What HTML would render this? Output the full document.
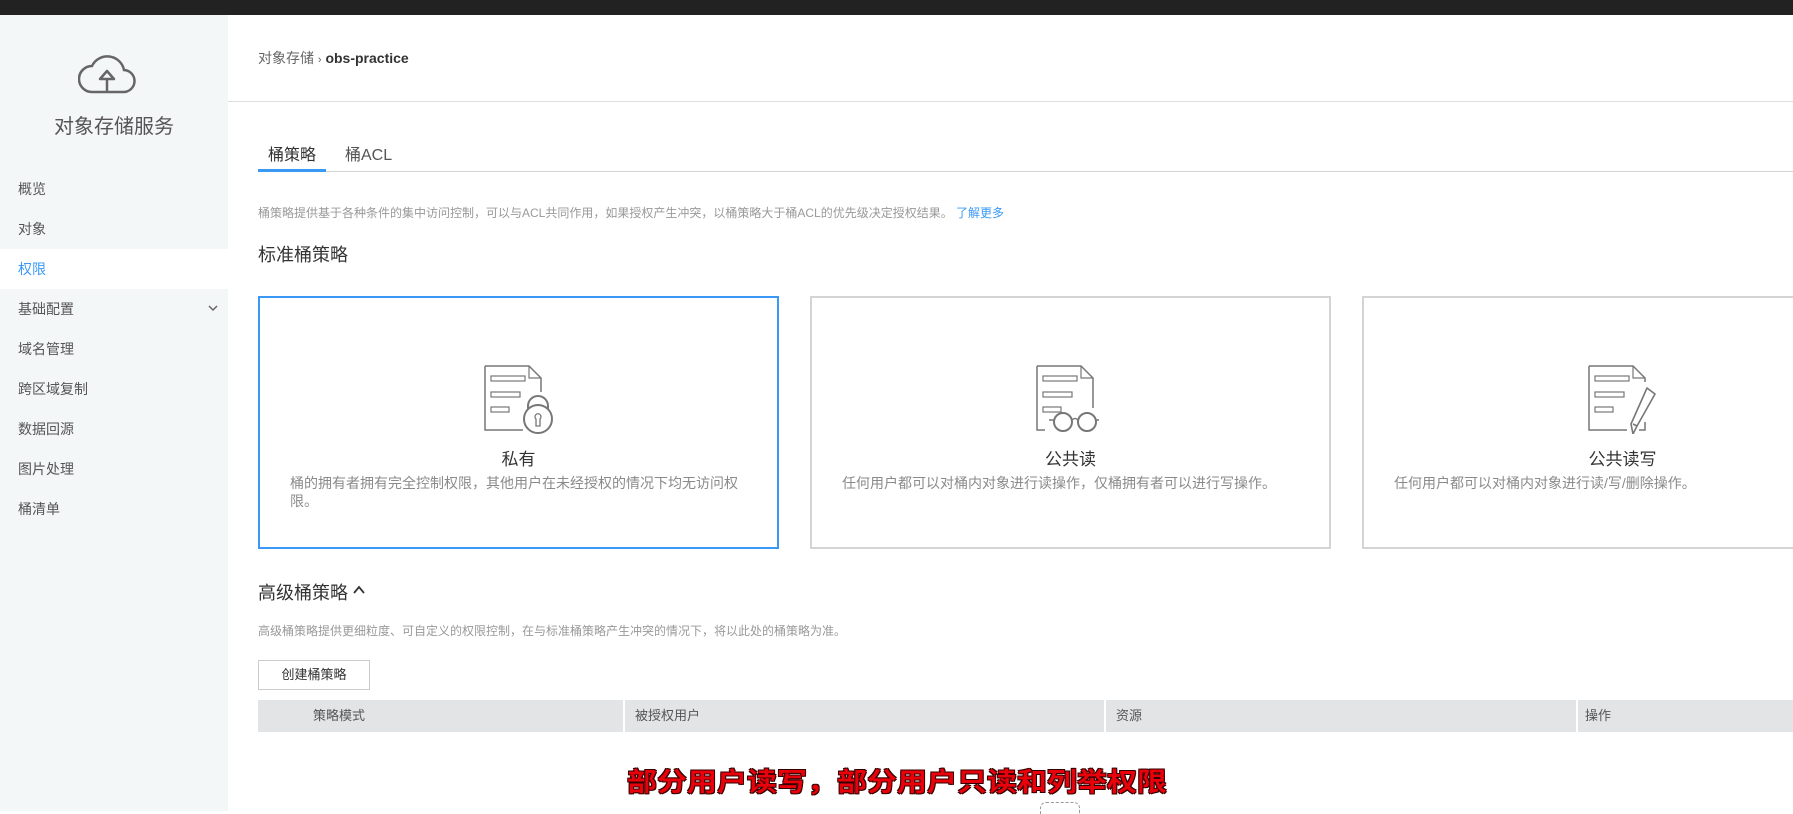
<!DOCTYPE html>
<html><head><meta charset="utf-8">
<style>
*{margin:0;padding:0;box-sizing:border-box}
body{width:1793px;height:811px;overflow:hidden;background:#fff;font-family:"Liberation Sans","Noto Sans CJK SC",sans-serif;position:relative;color:#333}
.a{position:absolute;white-space:nowrap}
#top{left:0;top:0;width:1793px;height:15px;background:#222}
#side{left:0;top:15px;width:228px;height:796px;background:#f4f7f8}
.mi{position:absolute;left:18px;font-size:14px;color:#555;line-height:20px}
.card{position:absolute;top:296px;width:521px;height:253px;border:2px solid #d4d4d4;background:#fff}
.card.sel{border-color:#3a99f5}
.card .t{position:absolute;left:0;right:0;top:147px;text-align:center;font-size:17px;color:#333}
.card .d{position:absolute;left:30px;width:452px;top:176px;font-size:14px;color:#8a8a8a;line-height:18px;white-space:normal}
.card svg{position:absolute;left:50%;top:66px;margin-left:-36px}
.th{position:absolute;top:700px;height:32px;background:#e2e4e6;font-size:13px;color:#555;line-height:32px}
</style></head><body>
<div class="a" id="top"></div>
<div class="a" id="side"></div>
<svg class="a" style="left:78px;top:48px" width="58" height="48" viewBox="0 0 58 48"><path d="M14 44 H45 A11 11 0 0 0 46 22 A17 17 0 0 0 14 18 A13 13 0 0 0 14 44 Z" fill="none" stroke="#666" stroke-width="2.5"/><path d="M29 44 V31 M22 31 L29 23 L36 31 Z" fill="none" stroke="#666" stroke-width="2.5" stroke-linejoin="round"/></svg>
<div class="a" style="left:0;width:228px;top:110px;text-align:center;font-size:20px;color:#555">对象存储服务</div>
<div class="mi" style="top:179px">概览</div>
<div class="mi" style="top:219px">对象</div>
<div class="a" style="left:0;top:249px;width:228px;height:40px;background:#fff"></div>
<div class="mi" style="top:259px;color:#3a99f5">权限</div>
<div class="mi" style="top:299px">基础配置</div>
<svg class="a" style="left:207px;top:303px" width="12" height="10"><path d="M2 3 L6 7 L10 3" fill="none" stroke="#666" stroke-width="1.5"/></svg>
<div class="mi" style="top:339px">域名管理</div>
<div class="mi" style="top:379px">跨区域复制</div>
<div class="mi" style="top:419px">数据回源</div>
<div class="mi" style="top:459px">图片处理</div>
<div class="mi" style="top:499px">桶清单</div>

<div class="a" style="left:258px;top:48px;font-size:14px;color:#666">对象存储 <span style="font-size:11px">›</span> <b style="color:#333">obs-practice</b></div>
<div class="a" style="left:228px;top:101px;width:1565px;height:1px;background:#ddd"></div>
<div class="a" style="left:268px;top:141px;font-size:16px;color:#333">桶策略</div>
<div class="a" style="left:345px;top:141px;font-size:16px;color:#555">桶ACL</div>
<div class="a" style="left:258px;top:171px;width:1535px;height:1px;background:#d4d4d4"></div>
<div class="a" style="left:258px;top:169px;width:68px;height:3px;background:#3a99f5"></div>
<div class="a" style="left:258px;top:204px;font-size:12px;color:#999">桶策略提供基于各种条件的集中访问控制，可以与ACL共同作用，如果授权产生冲突，以桶策略大于桶ACL的优先级决定授权结果。 <span style="color:#3a99f5">了解更多</span></div>
<div class="a" style="left:258px;top:241px;font-size:18px;color:#333">标准桶策略</div>

<div class="card sel" style="left:258px">
<svg width="72" height="70" viewBox="0 0 72 70"><path d="M2 2 H46 L58 14 V28 M40 66 H2 V2" fill="none" stroke="#777" stroke-width="1.5"/><path d="M46 2 V14 H58" fill="none" stroke="#777" stroke-width="1.2"/><rect x="8" y="12" width="34" height="5" fill="none" stroke="#777" stroke-width="1.2"/><rect x="8" y="28" width="29" height="5" fill="none" stroke="#777" stroke-width="1.2"/><rect x="8" y="43" width="18" height="5" fill="none" stroke="#777" stroke-width="1.2"/><path d="M45 46 V42 A10 10 0 0 1 65 42 V46" fill="none" stroke="#777" stroke-width="2"/><circle cx="55" cy="55" r="14" fill="#fff" stroke="#777" stroke-width="2"/><path d="M53 62 V55 A3 3 0 1 1 57 55 V62 Z" fill="none" stroke="#777" stroke-width="1.3"/></svg>
<div class="t">私有</div>
<div class="d">桶的拥有者拥有完全控制权限，其他用户在未经授权的情况下均无访问权限。</div>
</div>
<div class="card" style="left:810px">
<svg width="72" height="70" viewBox="0 0 72 70"><path d="M2 2 H46 L58 14 V44 M10 66 H2 V2" fill="none" stroke="#777" stroke-width="1.5"/><path d="M46 2 V14 H58" fill="none" stroke="#777" stroke-width="1.2"/><rect x="8" y="12" width="34" height="5" fill="none" stroke="#777" stroke-width="1.2"/><rect x="8" y="28" width="29" height="5" fill="none" stroke="#777" stroke-width="1.2"/><rect x="8" y="43" width="18" height="5" fill="none" stroke="#777" stroke-width="1.2"/><circle cx="28" cy="58" r="9" fill="#fff" stroke="#777" stroke-width="2"/><circle cx="52" cy="58" r="9" fill="#fff" stroke="#777" stroke-width="2"/><path d="M37 56 Q40 53 43 56 M19 56 H14 M61 56 H64" fill="none" stroke="#777" stroke-width="1.5"/></svg>
<div class="t">公共读</div>
<div class="d">任何用户都可以对桶内对象进行读操作，仅桶拥有者可以进行写操作。</div>
</div>
<div class="card" style="left:1362px">
<svg width="72" height="70" viewBox="0 0 72 70"><path d="M2 2 H46 L58 14 V18 M40 66 H2 V2 M58 58 V66 H52" fill="none" stroke="#777" stroke-width="1.5"/><path d="M46 2 V14 H58" fill="none" stroke="#777" stroke-width="1.2"/><rect x="8" y="12" width="34" height="5" fill="none" stroke="#777" stroke-width="1.2"/><rect x="8" y="28" width="29" height="5" fill="none" stroke="#777" stroke-width="1.2"/><rect x="8" y="43" width="18" height="5" fill="none" stroke="#777" stroke-width="1.2"/><path d="M60 24 L68 30 L50 62 L46 70 L44 60 Z M46 60 L50 62" fill="#fff" stroke="#777" stroke-width="1.6" stroke-linejoin="round"/></svg>
<div class="t">公共读写</div>
<div class="d">任何用户都可以对桶内对象进行读/写/删除操作。</div>
</div>

<div class="a" style="left:258px;top:579px;font-size:18px;color:#333">高级桶策略</div>
<svg class="a" style="left:352px;top:584px" width="14" height="12"><path d="M2 9 L7 3 L12 9" fill="none" stroke="#333" stroke-width="1.8"/></svg>
<div class="a" style="left:258px;top:622px;font-size:12px;color:#999">高级桶策略提供更细粒度、可自定义的权限控制，在与标准桶策略产生冲突的情况下，将以此处的桶策略为准。</div>
<div class="a" style="left:258px;top:660px;width:112px;height:30px;border:1px solid #ccc;font-size:13px;color:#333;text-align:center;line-height:28px">创建桶策略</div>
<div class="th" style="left:258px;width:365px;padding-left:55px">策略模式</div>
<div class="th" style="left:625px;width:479px;padding-left:10px">被授权用户</div>
<div class="th" style="left:1106px;width:470px;padding-left:10px">资源</div>
<div class="th" style="left:1578px;width:215px;padding-left:7px">操作</div>
<div class="a" style="left:627px;top:769px;font-size:30px;line-height:32px;font-weight:bold;color:#e8000a;transform:scaleY(0.88);transform-origin:top left;text-shadow:1px 1px 0 #300,-1px -1px 0 #300,1px -1px 0 #300,-1px 1px 0 #300">部分用户读写，部分用户只读和列举权限</div>
<div class="a" style="left:1040px;top:802px;width:40px;height:12px;border:1px dashed #999;border-radius:6px 6px 0 0;border-bottom:none"></div>
</body></html>
